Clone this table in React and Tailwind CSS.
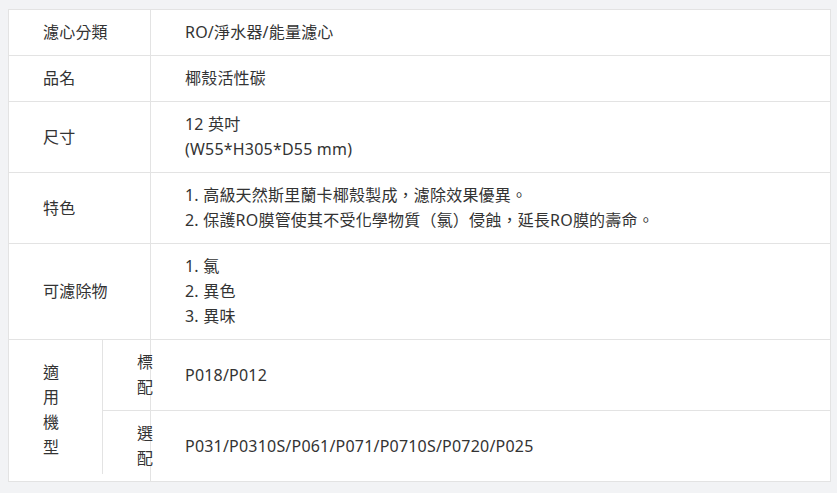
const rows = [
  { label: "濾心分類", lines: ["RO/淨水器/能量濾心"] },
  { label: "品名", lines: ["椰殼活性碳"] },
  { label: "尺寸", lines: ["12 英吋", "(W55*H305*D55 mm)"] },
  {
    label: "特色",
    lines: ["1. 高級天然斯里蘭卡椰殼製成，濾除效果優異。", "2. 保護RO膜管使其不受化學物質（氯）侵蝕，延長RO膜的壽命。"],
  },
  { label: "可濾除物", lines: ["1. 氯", "2. 異色", "3. 異味"] },
];

const models = [
  { label: "標配", value: "P018/P012" },
  { label: "選配", value: "P031/P0310S/P061/P071/P0710S/P0720/P025" },
];

export default function App() {
  return (
    <div
      className="min-h-screen bg-[#f2f3f5] pl-[8px] pt-[9px] text-[16px] leading-[25px] tracking-[0.2px] text-[#333]"
      style={{ fontFamily: '"Noto Sans", "Noto Sans CJK TC", sans-serif' }}
    >
      <div className="w-[823px] border border-[#e3e3e3] bg-white">
        {rows.map((row) => (
          <div key={row.label} className="flex border-b border-[#e3e3e3]">
            <div className="flex w-[142px] shrink-0 items-center border-r border-[#e3e3e3] py-[10px] pl-[34px]">
              {row.label}
            </div>
            <div className="flex flex-1 flex-col justify-center py-[10px] pl-[34px]">
              {row.lines.map((line) => (
                <p key={line}>{line}</p>
              ))}
            </div>
          </div>
        ))}

        <div className="flex">
          <div className="mb-[7px] flex w-[94px] shrink-0 items-center border-r border-[#e3e3e3] pl-[34px] pr-[34px] pt-[5px]">
            適用機型
          </div>
          <div className="flex-1">
            {models.map((m, i) => (
              <div key={m.label} className={i === 0 ? "flex border-b border-[#e3e3e3]" : "flex"}>
                <div className="flex w-[48px] shrink-0 items-center border-r border-[#e3e3e3] py-[10px] pl-[34px]">
                  {m.label}
                </div>
                <div className="flex flex-1 items-center py-[10px] pl-[34px]">{m.value}</div>
              </div>
            ))}
          </div>
        </div>
      </div>
    </div>
  );
}
